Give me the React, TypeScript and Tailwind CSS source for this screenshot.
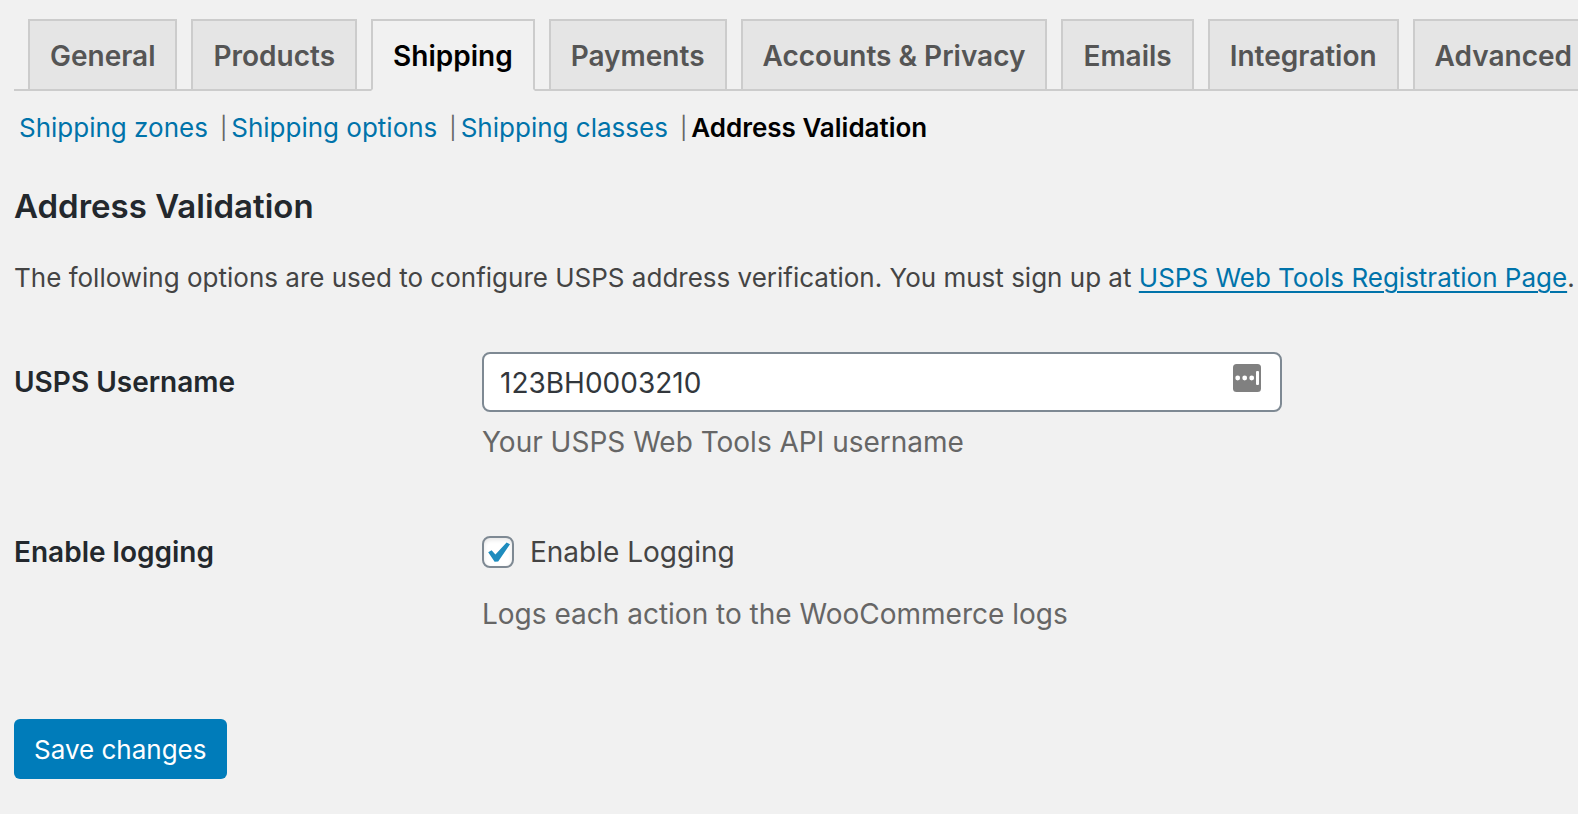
const tabs = [
  'General',
  'Products',
  'Shipping',
  'Payments',
  'Accounts & Privacy',
  'Emails',
  'Integration',
  'Advanced',
];

const sections = ['Shipping zones', 'Shipping options', 'Shipping classes'];

function Tabs() {
  return (
    <nav className="flex gap-[14px] overflow-hidden pt-[19px] pl-[14px] shadow-[inset_0_-2px_0_#ccc]">
      {tabs.map((name) => {
        const active = name === 'Shipping';
        return (
          <a
            key={name}
            href="#"
            aria-current={active ? 'page' : undefined}
            className={
              active
                ? 'shrink-0 border-2 border-[#ccc] border-b-[#f1f1f1] bg-[#f1f1f1] px-5 pt-[11px] pb-[9px] text-[28px] leading-[48px] font-semibold whitespace-nowrap text-black'
                : 'shrink-0 border-2 border-[#ccc] bg-[#e5e5e5] px-5 pt-[11px] pb-[9px] text-[28px] leading-[48px] font-semibold whitespace-nowrap text-[#555]'
            }
          >
            {name}
          </a>
        );
      })}
    </nav>
  );
}

function SectionLinks() {
  return (
    <ul className="flex pt-[17px] pl-[5px] text-[26px] leading-10 whitespace-nowrap text-[#666]">
      {sections.map((name) => (
        <li key={name} className="flex">
          <a href="#" className="mr-3 text-[#0073aa]">
            {name}
          </a>
          <span className="mr-1 text-[22px]">|</span>
        </li>
      ))}
      <li>
        <a href="#" aria-current="page" className="font-semibold text-black">
          Address Validation
        </a>
      </li>
    </ul>
  );
}

function PasswordManagerIcon() {
  return (
    <svg viewBox="0 0 28 28" className="absolute top-3 right-[21px] size-7" aria-hidden="true">
      <rect width="28" height="28" rx="3.5" fill="#808080" />
      <circle cx="4.7" cy="14" r="2.4" fill="#fff" />
      <circle cx="11.7" cy="14" r="2.4" fill="#fff" />
      <circle cx="18.7" cy="14" r="2.4" fill="#fff" />
      <rect x="23" y="7" width="3" height="14" rx="1" fill="#fff" />
    </svg>
  );
}

export default function App() {
  return (
    <div className="min-h-screen overflow-hidden bg-[#f1f1f1] pl-[14px] font-['Inter','Liberation_Sans',sans-serif] text-[#444]">
      <Tabs />
      <SectionLinks />

      <form onSubmit={(e) => e.preventDefault()}>
        <h2 className="mt-[34px] text-[33px] leading-[48px] font-semibold text-[#23282d]">Address Validation</h2>
        <p className="mt-7 text-[26px] leading-10 whitespace-nowrap">
          The following options are used to configure USPS address verification. You must sign up at{' '}
          <a href="#" className="text-[#0073aa] underline decoration-2 underline-offset-4">
            USPS Web Tools Registration Page
          </a>
          .
        </p>

        <div className="mt-[54px] grid grid-cols-[468px_1fr] items-start gap-y-[72px] pr-5">
          <label htmlFor="username" className="py-3 text-[28px] leading-9 font-semibold text-[#23282d]">
            USPS Username
          </label>
          <div>
            <div className="relative max-w-[800px]">
              <input
                id="username"
                type="text"
                defaultValue="123BH0003210"
                className="block h-[60px] w-full rounded-lg border-2 border-[#7e8993] bg-white px-4 pt-[2px] text-[28px] text-[#32373c] outline-none"
              />
              <PasswordManagerIcon />
            </div>
            <p className="mt-2 text-[28px] leading-[44px] text-[#666]">Your USPS Web Tools API username</p>
          </div>

          <div className="text-[28px] leading-8 font-semibold text-[#23282d]">Enable logging</div>
          <div>
            <label className="flex items-center gap-4 text-[28px] leading-8">
              <span className="relative size-8">
                <input
                  type="checkbox"
                  defaultChecked
                  className="peer block size-8 appearance-none rounded-lg border-2 border-[#7e8993] bg-white shadow-[inset_0_2px_4px_rgba(0,0,0,0.1)]"
                />
                <svg
                  viewBox="0 0 32 32"
                  className="pointer-events-none absolute inset-0 hidden size-8 peer-checked:block"
                  aria-hidden="true"
                >
                  <path
                    d="M6.2 16.2 9.6 14.2 13.4 18.6 24.6 6.4 28 8.2 16.2 25.4 12.6 25.8Z"
                    fill="#1e8cbe"
                  />
                </svg>
              </span>
              Enable Logging
            </label>
            <p className="mt-6 text-[28px] leading-[44px] text-[#666]">Logs each action to the WooCommerce logs</p>
          </div>
        </div>

        <button
          type="submit"
          className="mt-[83px] mb-[35px] block h-[60px] rounded-md bg-[#007cba] px-5 text-[26px] text-white"
        >
          Save changes
        </button>
      </form>
    </div>
  );
}
